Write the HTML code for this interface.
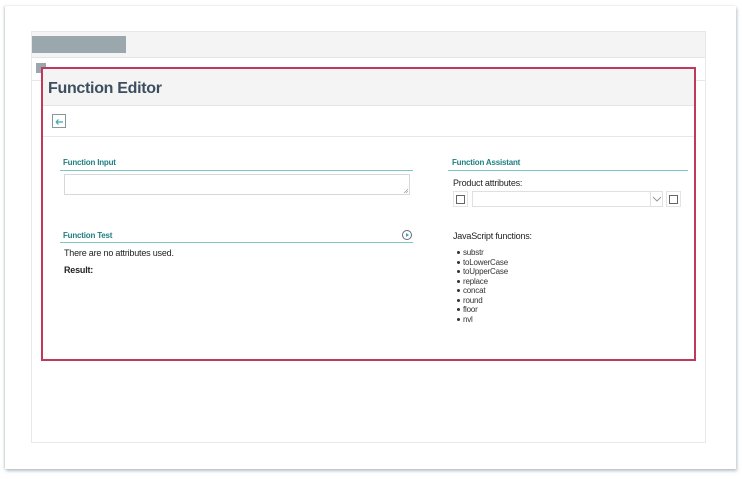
<!DOCTYPE html>
<html><head><style>
*{margin:0;padding:0;box-sizing:border-box}
body{width:742px;height:479px;background:#fff;position:relative;overflow:hidden;font-family:"Liberation Sans",sans-serif}
.a{position:absolute}
.t{font-size:8px;font-weight:bold;color:#1f7f82;letter-spacing:-0.2px}
.n{font-size:9px;color:#222;letter-spacing:-0.2px}
ul{list-style:none}
li{font-size:8px;color:#333;height:9.5px;line-height:9.5px;letter-spacing:-0.2px}
li:before{content:"";display:inline-block;width:3px;height:3px;border-radius:50%;background:#333;margin-right:3px;vertical-align:middle}
</style></head><body>
<div class="a" style="left:5px;top:6px;width:731px;height:463px;background:#fff;box-shadow:1px 2px 3px rgba(120,140,155,.5),-1px 0 2px rgba(150,160,170,.4)"></div>
<div class="a" style="left:31px;top:31px;width:675px;height:412px;border:1px solid #e6e8ea;background:#fff"></div>
<div class="a" style="left:32px;top:32px;width:673px;height:26px;background:#f4f4f4;border-bottom:1px solid #e4e4e4"></div>
<div class="a" style="left:32px;top:36px;width:94px;height:17px;background:#9aa7ad"></div>
<div class="a" style="left:32px;top:80px;width:673px;height:1px;background:#e8e8e8"></div>
<div class="a" style="left:36px;top:63px;width:10px;height:10px;background:#9aa7ad"></div>
<div class="a" style="left:41px;top:67px;width:655px;height:294px;border:2px solid #c0385a;background:#fff"></div>
<div class="a" style="left:43px;top:69px;width:651px;height:37px;background:#f4f4f4;border-bottom:1px solid #e4e4e4"></div>
<div class="a" style="left:48px;top:80px;font-size:16px;font-weight:bold;color:#3d4f5e;letter-spacing:-0.3px">Function Editor</div>
<div class="a" style="left:52px;top:114px;width:14px;height:14px;border:1px solid #8a969c;background:#fff"></div>
<svg class="a" style="left:52px;top:114px" width="14" height="14"><path d="M4 8h7M4 8l2.5-2.5M4 8l2.5 2.5" stroke="#3aa8b0" stroke-width="1.2" fill="none"/></svg>
<div class="a" style="left:43px;top:136px;width:651px;height:1px;background:#e8e8e8"></div>

<div class="a t" style="left:63px;top:158px">Function Input</div>
<div class="a" style="left:60px;top:170px;width:353px;height:1px;background:#7cc6c3"></div>
<div class="a" style="left:64px;top:174px;width:346px;height:21px;border:1px solid #d8d8d8"></div>
<svg class="a" style="left:403px;top:188px" width="6" height="6"><path d="M1 5L5 1M3 5L5 3" stroke="#999" stroke-width=".7"/></svg>
<div class="a t" style="left:63px;top:231px">Function Test</div>
<svg class="a" style="left:401px;top:229px" width="12" height="12"><circle cx="6" cy="6" r="4.5" stroke="#667" fill="none"/><path d="M5 4v4l3-2z" fill="#3aa8b0"/></svg>
<div class="a" style="left:60px;top:242px;width:353px;height:1px;background:#7cc6c3"></div>
<div class="a n" style="left:64px;top:248px">There are no attributes used.</div>
<div class="a n" style="left:64px;top:265px;font-weight:bold">Result:</div>

<div class="a t" style="left:452px;top:158px">Function Assistant</div>
<div class="a" style="left:448px;top:170px;width:240px;height:1px;background:#7cc6c3"></div>
<div class="a n" style="left:453px;top:178px">Product attributes:</div>
<div class="a" style="left:453px;top:191px;width:15px;height:16px;border:1px solid #e4e4e4"></div>
<div class="a" style="left:456px;top:195px;width:9px;height:9px;border:1px solid #666"></div>
<div class="a" style="left:472px;top:191px;width:191px;height:16px;border:1px solid #e0e0e0"></div>
<div class="a" style="left:650px;top:192px;width:1px;height:14px;background:#e0e0e0"></div>
<svg class="a" style="left:652px;top:195px" width="10" height="8"><path d="M1 2l4 4 4-4" stroke="#999" fill="none"/></svg>
<div class="a" style="left:666px;top:191px;width:15px;height:16px;border:1px solid #e4e4e4"></div>
<div class="a" style="left:669px;top:195px;width:9px;height:9px;border:1px solid #666"></div>
<div class="a n" style="left:453px;top:231px">JavaScript functions:</div>
<ul class="a" style="left:457px;top:248px">
<li>substr</li><li>toLowerCase</li><li>toUpperCase</li><li>replace</li><li>concat</li><li>round</li><li>floor</li><li>nvl</li>
</ul>
</body></html>
